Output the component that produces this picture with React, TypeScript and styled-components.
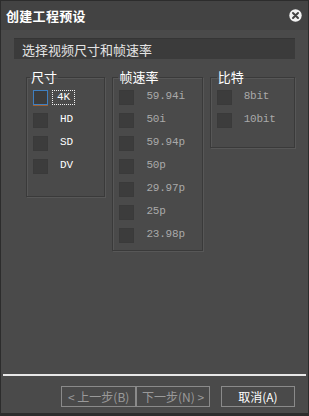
import React from "react";
import styled, { createGlobalStyle } from "styled-components";

const Global = createGlobalStyle`
  html, body { margin: 0; padding: 0; background: #474747; }
  * { box-sizing: border-box; }
`;

const Window = styled.div`
  width: 309px;
  height: 416px;
  background: #4a4a4a;
  border: 1px solid #2c2c2c;
  border-bottom-width: 3px;
  display: flex;
  flex-direction: column;
  font-family: "Noto Sans CJK SC", "Noto Sans", sans-serif;
  color: #e8e8e8;
`;

const TitleBar = styled.div`
  height: 29px;
  display: flex;
  align-items: center;
  justify-content: space-between;
  padding: 0 6px 1px 5px;
  background: #434343;
`;

const Title = styled.div`
  font-size: 13px;
  font-weight: bold;
  color: #ffffff;
  letter-spacing: 0.3px;
`;

const Body = styled.div`
  flex: 1;
  display: flex;
  flex-direction: column;
  padding: 8px 13px 0 13px;
`;

const Header = styled.div`
  height: 21px;
  background: #3b3b3b;
  border-top: 1px solid #353535;
  display: flex;
  align-items: center;
  padding-left: 8px;
  font-size: 13px;
  color: #e4e4e4;
`;

const Groups = styled.div`
  display: flex;
  align-items: flex-start;
  margin-top: 11px;
  padding-left: 12px;
  gap: 7px;
`;

const Group = styled.fieldset<{ $w: number; $h: number; $gap: number }>`
  width: ${(p) => p.$w}px;
  height: ${(p) => p.$h}px;
  margin: 0;
  border: 1px solid #3a3a3a;
  box-shadow: inset 1px 1px 0 #575757, 1px 1px 0 #575757;
  padding: 6px 0 0 6px;
  min-width: 0;
  display: flex;
  flex-direction: column;
  gap: 9px;
  & > legend {
    margin-left: ${(p) => p.$gap}px;
  }
`;

const Legend = styled.legend`
  font-size: 13px;
  color: #ffffff;
  padding: 0 1px;
  line-height: 14px;
`;

const Row = styled.div`
  display: flex;
  align-items: center;
  height: 14px;
`;

const Box = styled.div<{ $focus?: boolean }>`
  width: 15px;
  height: 15px;
  flex: none;
  background: #3c3c3c;
  border: 1px solid ${(p) => (p.$focus ? "#3f7fc0" : "#3a3a3a")};
  box-shadow: ${(p) => (p.$focus ? "0 1px 0 #a06030" : "none")};
`;

const Label = styled.span<{ $on?: boolean; $focus?: boolean }>`
  font-family: "Liberation Mono", "DejaVu Sans Mono", monospace;
  font-size: 11px;
  color: ${(p) => (p.$on ? "#ffffff" : "#a9a9a9")};
  margin-left: ${(p) => (p.$focus ? 4 : 12)}px;
  padding: 0 ${(p) => (p.$focus ? 4 : 0)}px;
  border: ${(p) => (p.$focus ? "1px dotted #f0f0f0" : "none")};
  height: ${(p) => (p.$focus ? 15 : 14)}px;
  line-height: 13px;
  letter-spacing: -0.2px;
`;

const Spacer = styled.div`
  flex: 1;
`;

const Divider = styled.div`
  height: 2px;
  background: #e8e8e8;
  margin: 0 -11px;
`;

const Footer = styled.div`
  display: flex;
  padding: 10px 0 6px 47px;
  height: 37px;
  align-items: flex-start;
`;

const Btn = styled.div<{ $on?: boolean; $w: number }>`
  width: ${(p) => p.$w}px;
  height: 21px;
  border: 1px solid #8a8a8a;
  display: flex;
  align-items: center;
  justify-content: center;
  font-size: 12px;
  color: ${(p) => (p.$on ? "#ffffff" : "#9a9a9a")};
  font-family: "Noto Sans CJK SC", sans-serif;
  white-space: nowrap;
`;

const CancelBtn = styled(Btn)`
  margin-left: 11px;
`;

const Close = () => (
  <svg width="13" height="13" viewBox="0 0 13 13">
    <circle cx="6.5" cy="6.5" r="6.2" fill="#f2f2f2" />
    <path d="M4 4 L9 9 M9 4 L4 9" stroke="#444" strokeWidth="2" strokeLinecap="round" />
  </svg>
);

const sizes = ["4K", "HD", "SD", "DV"];
const rates = ["59.94i", "50i", "59.94p", "50p", "29.97p", "25p", "23.98p"];
const bits = ["8bit", "10bit"];

export default function App() {
  return (
    <>
      <Global />
      <Window>
        <TitleBar>
          <Title>创建工程预设</Title>
          <Close />
        </TitleBar>
        <Body>
          <Header>选择视频尺寸和帧速率</Header>
          <Groups>
            <Group $w={80} $h={127} $gap={-3}>
              <Legend>尺寸</Legend>
              {sizes.map((s, i) => (
                <Row key={s}>
                  <Box $focus={i === 0} />
                  <Label $on $focus={i === 0}>{s}</Label>
                </Row>
              ))}
            </Group>
            <Group $w={91} $h={181} $gap={-1}>
              <Legend>帧速率</Legend>
              {rates.map((s) => (
                <Row key={s}>
                  <Box />
                  <Label>{s}</Label>
                </Row>
              ))}
            </Group>
            <Group $w={86} $h={78} $gap={0}>
              <Legend>比特</Legend>
              {bits.map((s) => (
                <Row key={s}>
                  <Box />
                  <Label>{s}</Label>
                </Row>
              ))}
            </Group>
          </Groups>
          <Spacer />
          <Divider />
          <Footer>
            <Btn $w={76}>&lt; 上一步(B)</Btn>
            <Btn $w={74}>下一步(N) &gt;</Btn>
            <CancelBtn $w={75} $on>取消(A)</CancelBtn>
          </Footer>
        </Body>
      </Window>
    </>
  );
}
